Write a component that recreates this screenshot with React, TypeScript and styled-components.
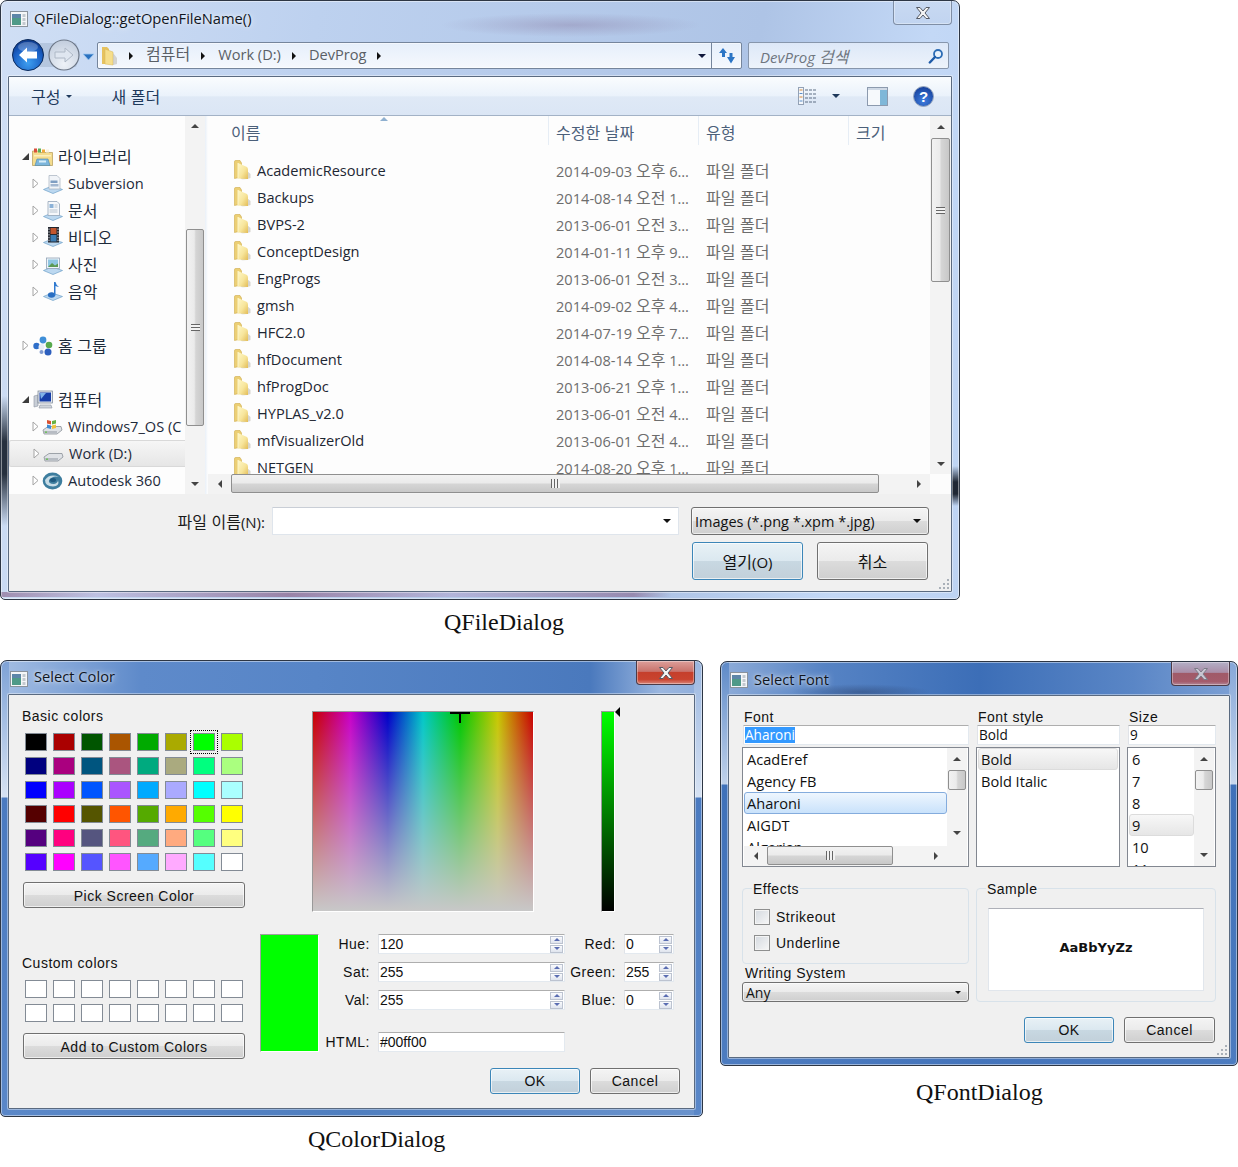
import React from "react";
import styled, { createGlobalStyle } from "styled-components";

const GlobalStyle = createGlobalStyle`
  html, body { margin: 0; padding: 0; background: #fff; }
  * { box-sizing: border-box; }
`;

const uiFont = `"Open Sans", "Noto Sans CJK KR", sans-serif`;
const qtFont = `"Liberation Sans", "Noto Sans CJK KR", sans-serif`;

const fileGlass = `
  linear-gradient(90deg, rgba(130,90,130,.6), rgba(170,130,180,.25) 10%, rgba(130,80,120,.6) 30%, rgba(170,130,180,.3) 47%, rgba(130,90,130,.55) 66%, transparent 70%) 0 calc(100% - 2px) / 100% 5px no-repeat,
  linear-gradient(180deg, transparent, #26303e 35%, #26303e 60%, transparent) 0 395px / 7px 130px no-repeat,
  linear-gradient(180deg, transparent, #1f2734 40%, #1f2734 70%, transparent) 100% 465px / 7px 40px no-repeat,
  radial-gradient(ellipse 130px 12px at 570px 24px, rgba(130,110,150,.35), transparent),
  linear-gradient(100deg, #d0dff5 0, #bdd1ef 30%, #aec4e6 72%, #c3d8f6 88%, #bdd3f3 100%)`;

const colorGlass = `
  linear-gradient(180deg, #7ea2d6 0, #d6e2f3 136px, #4a7ac0 137px, #5a87c8 100%) 0 0 / 8px 100% no-repeat,
  linear-gradient(180deg, #9ab6df 0, #d6e2f3 136px, #4a7ac0 137px, #5a87c8 100%) 100% 0 / 8px 100% no-repeat,
  linear-gradient(90deg, #a4bee3 0, #5e8aca 20%, #5785c7 45%, #4a79bd 84%, #9ab6df 94%, #90aedb 100%) 0 0 / 100% 34px no-repeat,
  linear-gradient(90deg, #5b88c8, #4f7ebf 50%, #6a93cd)`;

const fontGlass = `
  linear-gradient(180deg, #5e8ac8 0, #bfd1ea 122px, #3f71b9 123px, #4d7cc0 100%) 0 0 / 8px 100% no-repeat,
  linear-gradient(180deg, #86a7d8 0, #c8d8ee 122px, #3f71b9 123px, #4d7cc0 100%) 100% 0 / 8px 100% no-repeat,
  radial-gradient(ellipse 70px 8px at 140px 30px, rgba(40,60,100,.45), transparent),
  linear-gradient(90deg, #8fadd9 0, #5683c4 20%, #3c6eb7 50%, #5a86c6 80%, #7ea1d5 100%) 0 0 / 100% 34px no-repeat,
  linear-gradient(90deg, #4d7cc0, #4474bb 50%, #4d7cc0)`;

const Desktop = styled.main`
  position: relative;
  width: 1238px;
  height: 1167px;
  overflow: hidden;
  background: #fff;
  font-family: ${uiFont};
`;

const Window = styled.section<{ $x: number; $y: number; $w: number; $h: number; $glass: string }>`
  position: absolute;
  left: ${(p) => p.$x}px;
  top: ${(p) => p.$y}px;
  width: ${(p) => p.$w}px;
  height: ${(p) => p.$h}px;
  display: flex;
  flex-direction: column;
  padding: 0 7px 7px;
  border: 1px solid #2d3644;
  border-radius: 7px 7px 5px 5px;
  background: ${(p) => p.$glass};
  box-shadow: inset 0 0 0 1px rgba(255, 255, 255, 0.45);
  overflow: hidden;
`;

const Caption = styled.div<{ $x: number; $y: number }>`
  position: absolute;
  left: ${(p) => p.$x}px;
  top: ${(p) => p.$y}px;
  font: 24px/28px "Liberation Serif", serif;
  color: #111;
  white-space: nowrap;
`;

const TitleBar = styled.header<{ $h: number }>`
  flex: none;
  height: ${(p) => p.$h}px;
  display: flex;
  align-items: flex-start;
  padding-left: 2px;
`;

const TitleIconSlot = styled.span`
  flex: none;
  margin-top: 9px;
  width: 18px;
  height: 16px;
`;

const TitleText = styled.h1<{ $top: number }>`
  margin: ${(p) => p.$top}px 0 0 6px;
  font: 400 14.7px/20px ${uiFont};
  color: #10161f;
  text-shadow: 0 0 7px rgba(255, 255, 255, 0.85), 0 0 3px rgba(255, 255, 255, 0.6);
  white-space: nowrap;
`;

const CloseButton = styled.button<{ $kind: "idle" | "active" | "dim" }>`
  flex: none;
  margin-left: auto;
  width: 59px;
  height: 24px;
  padding: 0;
  display: flex;
  align-items: center;
  justify-content: center;
  border: 1px solid ${(p) => (p.$kind === "idle" ? "#7f8ea5" : "#4c3b47")};
  border-top: none;
  border-radius: 0 0 4px 4px;
  background: ${(p) =>
    p.$kind === "active"
      ? "linear-gradient(180deg,#dc9f9a 0,#c9736c 45%,#c53f2c 50%,#c9432f 80%,#d8867a 100%)"
      : p.$kind === "dim"
      ? "linear-gradient(180deg,#b3afc6 0,#aa8ea8 45%,#a05a68 50%,#a45c6c 85%,#b08798 100%)"
      : "linear-gradient(180deg,#c8d9f2,#c1d4f0)"};
  box-shadow: inset 0 0 0 1px rgba(255, 255, 255, 0.35);
`;

const AddressRow = styled.div`
  flex: none;
  height: 27px;
  margin-bottom: 7px;
  display: flex;
  align-items: stretch;
`;

const NavCluster = styled.div`
  flex: none;
  width: 85px;
  height: 34px;
  margin: -4px 0 -3px 4px;
`;

const PathBox = styled.div`
  flex: none;
  width: 645px;
  display: flex;
  align-items: center;
  border: 1px solid #75859c;
  border-radius: 2px;
  background: linear-gradient(180deg, #e6effb, #f5f8fd);
  box-shadow: inset 0 0 0 1px rgba(255, 255, 255, 0.5);
  font-size: 14.6px;
  color: #5a5f66;
`;

const PathIconSlot = styled.span`
  margin: 0 10px 0 3px;
  width: 18px;
  height: 20px;
`;

const Crumb = styled.span`
  margin-right: 11px;
  line-height: 22px;
  white-space: nowrap;
  padding-bottom: 4px;
`;

const CrumbArrow = styled.span`
  margin-right: 13px;
`;

const PathDrop = styled.span`
  margin-left: auto;
  margin-right: 5px;
`;

const RefreshCell = styled.span`
  flex: none;
  align-self: stretch;
  width: 30px;
  border-left: 1px solid #75859c;
  display: flex;
  align-items: center;
  justify-content: center;
`;

const SearchBox = styled.div`
  flex: none;
  margin-left: 6px;
  width: 201px;
  display: flex;
  align-items: center;
  padding: 0 4px 0 11px;
  border: 1px solid #8796ac;
  border-radius: 2px;
  background: linear-gradient(180deg, #dde8f8, #edf3fb);
  font-size: 15px;
  font-style: italic;
  color: #6f7680;
  justify-content: space-between;
`;

const Client = styled.div`
  flex: 1;
  min-height: 0;
  position: relative;
  display: flex;
  flex-direction: column;
  border: 1px solid #5a6a80;
  border-radius: 1px;
  background: #f0f0f0;
  box-shadow: 0 0 0 1px rgba(255, 255, 255, 0.4);
  overflow: hidden;
`;

const Toolbar = styled.div`
  flex: none;
  height: 39px;
  display: flex;
  align-items: center;
  border-bottom: 1px solid #a3b2c6;
  background: linear-gradient(180deg, #fafcfe 0, #eaf2fb 50%, #dfe9f6 52%, #dbe6f5 100%);
  color: #1e395b;
  font-size: 15px;
`;

const ToolLabel = styled.span`
  display: flex;
  align-items: center;
  gap: 6px;
  line-height: 20px;
`;

const ToolIcon = styled.span`
  display: flex;
  align-items: center;
`;

const Panes = styled.div`
  flex: none;
  height: 378px;
  display: flex;
  background: #fdfdfd;
`;

const NavTree = styled.nav`
  flex: none;
  width: 176px;
  padding-top: 27px;
  overflow: hidden;
  color: #1d2a3a;
  font-size: 14.6px;
`;

const NavRow = styled.div<{ $depth: number; $current?: boolean; $gap?: boolean }>`
  height: 27px;
  margin-bottom: ${(p) => (p.$gap ? "27px" : "0")};
  display: flex;
  align-items: center;
  padding-left: ${(p) => (p.$depth ? 20 : 10)}px;
  white-space: nowrap;
  border: ${(p) => (p.$current ? "1px solid #d9d9d9" : "none")};
  border-right: none;
  border-radius: 2px 0 0 2px;
  background: ${(p) => (p.$current ? "linear-gradient(180deg,#f6f6f6,#e6e6e6)" : "transparent")};
`;

const NavLabel = styled.span`
  padding-bottom: 2px;
`;

const IconSlot = styled.span<{ $w: number; $mr?: number }>`
  flex: none;
  width: ${(p) => p.$w}px;
  margin-right: ${(p) => p.$mr ?? 0}px;
  display: flex;
  align-items: center;
  justify-content: center;
`;

const Ko = styled.span`
  font-family: "Noto Sans CJK KR", sans-serif;
  font-size: 16px;
  word-spacing: 1px;
`;

const Mixed = ({ text }: { text: string }) => (
  <>
    {text.split(/([\uAC00-\uD7A3]+(?: [\uAC00-\uD7A3]+)*)/).map((part, i) =>
      i % 2 ? <Ko key={i}>{part}</Ko> : <React.Fragment key={i}>{part}</React.Fragment>
    )}
  </>
);

const Tri = styled.i<{ $d: "up" | "down" | "left" | "right"; $s?: number; $c?: string }>`
  display: block;
  flex: none;
  width: 0;
  height: 0;
  border-style: solid;
  ${({ $d, $s = 4, $c = "#444" }) => {
    const t = "transparent";
    if ($d === "up") return `border-width:0 ${$s}px ${$s}px;border-color:${t} ${t} ${$c};`;
    if ($d === "down") return `border-width:${$s}px ${$s}px 0;border-color:${$c} ${t} ${t};`;
    if ($d === "left") return `border-width:${$s}px ${$s}px ${$s}px 0;border-color:${t} ${$c} ${t} ${t};`;
    return `border-width:${$s}px 0 ${$s}px ${$s}px;border-color:${t} ${t} ${t} ${$c};`;
  }}
`;

const VBar = styled.div<{ $w?: number }>`
  flex: none;
  width: ${(p) => p.$w ?? 20}px;
  display: flex;
  flex-direction: column;
  background: #f3f3f3;
`;

const ScrollBtn = styled.div<{ $len?: number }>`
  flex: none;
  height: ${(p) => p.$len ?? 20}px;
  display: flex;
  align-items: center;
  justify-content: center;
`;

const VThumb = styled.div<{ $top: number; $h: number }>`
  flex: none;
  margin: ${(p) => p.$top}px 1px 0;
  height: ${(p) => p.$h}px;
  display: flex;
  align-items: center;
  justify-content: center;
  border: 1px solid #8f8f8f;
  border-radius: 2px;
  background: linear-gradient(90deg, #f2f2f2 0, #ebebeb 45%, #d5d5d5 55%, #c8c8c8 100%);
`;

const DownBtn = styled(ScrollBtn)`
  margin-top: auto;
`;

const GripV = styled.i`
  display: block;
  width: 9px;
  height: 7px;
  background: repeating-linear-gradient(180deg, #666 0 1px, #f2f2f2 1px 3px);
`;

const HBar = styled.div<{ $h?: number }>`
  flex: none;
  height: ${(p) => p.$h ?? 20}px;
  display: flex;
  align-items: stretch;
  background: #f3f3f3;
`;

const HBtn = styled.div`
  flex: none;
  width: 23px;
  display: flex;
  align-items: center;
  justify-content: center;
`;

const HThumb = styled.div<{ $w: number }>`
  flex: none;
  width: ${(p) => p.$w}px;
  margin: 0 0 1px;
  display: flex;
  align-items: center;
  justify-content: center;
  border: 1px solid #8f8f8f;
  border-radius: 2px;
  background: linear-gradient(180deg, #f2f2f2 0, #ebebeb 45%, #d5d5d5 55%, #c8c8c8 100%);
`;

const HEnd = styled(HBtn)`
  margin-left: auto;
`;

const GripH = styled.i`
  display: block;
  width: 9px;
  height: 9px;
  background: repeating-linear-gradient(90deg, #666 0 1px, #f2f2f2 1px 3px);
`;

const Splitter = styled.div`
  flex: none;
  width: 3px;
  background: linear-gradient(90deg, #e9f0f8, #fdfdfd);
`;

const ListSide = styled.div`
  flex: 1;
  min-width: 0;
  display: flex;
  flex-direction: column;
`;

const ListMain = styled.div`
  flex: 1;
  min-height: 0;
  display: flex;
`;

const FileArea = styled.div`
  flex: 1;
  min-width: 0;
  position: relative;
  overflow: hidden;
`;

const SortCaret = styled.span`
  position: absolute;
  left: 172px;
  top: 1px;
`;

const Columns = "340px 150px 150px 1fr";

const HeaderRow = styled.div`
  height: 40px;
  display: grid;
  grid-template-columns: ${Columns};
  padding-bottom: 11px;
  color: #4c607a;
  font-size: 15px;
`;

const HeaderCell = styled.div<{ $pad: number; $sep?: boolean }>`
  display: flex;
  align-items: center;
  padding: 3px 0 0 ${(p) => p.$pad}px;
  border-left: ${(p) => (p.$sep ? "1px solid #e6edf5" : "none")};
`;

const FileRow = styled.div`
  height: 27px;
  display: grid;
  grid-template-columns: ${Columns};
  align-items: center;
  white-space: nowrap;
  font-size: 14.6px;
`;

const NameCell = styled.div`
  display: flex;
  align-items: center;
  gap: 5px;
  padding-left: 26px;
  color: #1d2733;
`;

const MetaCell = styled.div`
  padding-left: 8px;
  color: #6d6d6d;
`;

const HCorner = styled.div`
  flex: none;
  width: 21px;
  background: #fcfcfc;
`;

const FilePanel = styled.div`
  flex: 1;
  display: flex;
  flex-direction: column;
  padding: 13px 22px 0 0;
`;

const FileFormRow = styled.div`
  display: flex;
  align-items: center;
  justify-content: flex-end;
  height: 28px;
`;

const FormLabel = styled.label`
  margin-right: 7px;
  font-size: 15px;
  color: #1b1b1b;
  white-space: nowrap;
`;

const FileNameInput = styled.div`
  width: 407px;
  height: 28px;
  margin-right: 12px;
  padding-right: 7px;
  display: flex;
  align-items: center;
  justify-content: flex-end;
  background: #fff;
  border: 1px solid #dfe5ec;
  border-top-color: #c9ced6;
  border-radius: 1px;
`;

const qtButtonFace = "linear-gradient(180deg,#f4f4f4 0,#ebebeb 49%,#dcdcdc 50%,#cfcfcf 100%)";

const Combo = styled.div<{ $w?: number; $h: number; $size?: number; $font?: string }>`
  width: ${(p) => (p.$w ? `${p.$w}px` : "100%")};
  height: ${(p) => p.$h}px;
  display: flex;
  align-items: center;
  justify-content: space-between;
  padding: 0 7px 0 3px;
  border: 1px solid #707070;
  border-radius: 3px;
  background: ${qtButtonFace};
  box-shadow: inset 0 0 0 1px rgba(255, 255, 255, 0.6);
  font-size: ${(p) => p.$size ?? 14.5}px;
  color: #111;
`;

const ButtonRow = styled.div<{ $gap: number; $top: number; $right?: number }>`
  display: flex;
  justify-content: flex-end;
  gap: ${(p) => p.$gap}px;
  margin-top: ${(p) => p.$top}px;
  padding-right: ${(p) => p.$right ?? 0}px;
`;

const QtButton = styled.button<{ $w?: number; $h: number; $default?: boolean; $ui?: boolean; $low?: boolean }>`
  flex: none;
  display: block;
  width: ${(p) => (p.$w ? `${p.$w}px` : "100%")};
  height: ${(p) => p.$h}px;
  padding: ${(p) => (p.$low ? "2px 0 0" : "0")};
  border: 1px solid ${(p) => (p.$default ? "#3c86b8" : "#707070")};
  border-radius: 3px;
  background: ${(p) =>
    p.$default
      ? "linear-gradient(180deg,#e8f1f6 0,#dbe8f0 49%,#c8d8e2 50%,#c2d0da 100%)"
      : qtButtonFace};
  box-shadow: inset 0 0 0 1px rgba(255, 255, 255, 0.65);
  font: ${(p) => (p.$ui ? `15px/20px ${uiFont}` : `14px/20px ${qtFont}`)};
  letter-spacing: ${(p) => (p.$ui ? 0 : 0.5)}px;
  color: #111;
`;

const ResizeGrip = styled.span`
  position: absolute;
  right: 1px;
  bottom: 1px;
  line-height: 0;
`;

/* ---- Color dialog ---- */

const QtText = styled.span`
  font: 14px/16px ${qtFont};
  letter-spacing: 0.5px;
  color: #111;
  white-space: nowrap;
`;

const ColorLayout = styled.div`
  flex: 1;
  display: grid;
  grid-template-columns: 222px 1fr;
  padding-left: 14px;
`;

const ColorLeft = styled.div`
  display: flex;
  flex-direction: column;
  padding-top: 13px;
`;

const GroupLabel = styled(QtText)<{ $top?: number }>`
  display: block;
  margin-top: ${(p) => p.$top ?? 0}px;
  margin-left: -1px;
`;

const SwatchGrid = styled.div<{ $top: number }>`
  display: grid;
  grid-template-columns: repeat(8, 22px);
  grid-auto-rows: 18px;
  gap: 6px;
  margin: ${(p) => p.$top}px 0 0 2px;
`;

const Swatch = styled.div<{ $c: string; $focus?: boolean }>`
  position: relative;
  border: 1px solid #838b95;
  background: ${(p) => p.$c};
  ${(p) =>
    p.$focus &&
    `&::after { content:""; position:absolute; inset:-4px; border:1px dotted #000; }`}
`;

const ColorRight = styled.div`
  display: flex;
  flex-direction: column;
  padding: 16px 14px 0 15px;
`;

const PickerRow = styled.div`
  flex: none;
  height: 201px;
  display: flex;
  padding-left: 52px;
`;

const Picker = styled.div`
  position: relative;
  width: 222px;
  height: 201px;
  border: 1px solid;
  border-color: #999 #fff #fff #999;
  background: linear-gradient(180deg, rgba(200, 200, 200, 0), #c8c8c8),
    linear-gradient(90deg, #c80000, #c800c8 17%, #0000c8 34%, #00c8c8 50%, #00c800 67%, #c8c800 84%, #c80000);
`;

const Crosshair = styled.span`
  position: absolute;
  left: 137px;
  top: 0;
  width: 20px;
  height: 11px;
  background: linear-gradient(#000, #000) 0 0 / 20px 2px no-repeat,
    linear-gradient(#000, #000) 9px 0 / 2px 11px no-repeat;
`;

const ValueBar = styled.div`
  position: relative;
  margin-left: 67px;
  width: 14px;
  height: 201px;
  border: 1px solid;
  border-color: #999 #fff #fff #999;
  background: linear-gradient(180deg, #00ff00, #000);
`;

const ValueMark = styled.span`
  position: absolute;
  left: 13px;
  top: -5px;
`;

const ColorBottom = styled.div`
  flex: none;
  margin-top: 22px;
  display: flex;
`;

const Preview = styled.div`
  flex: none;
  width: 59px;
  height: 118px;
  border: 1px solid;
  border-color: #a0a0a0 #fff #fff #a0a0a0;
  background: #00ff00;
`;

const FieldGrid = styled.div`
  display: grid;
  grid-template-columns: 51px 187px 43px 50px;
  grid-auto-rows: 20px;
  column-gap: 8px;
  row-gap: 8px;
`;

const FieldLabel = styled(QtText)`
  align-self: center;
  text-align: right;
  direction: ltr;
  justify-self: end;
`;

const Edit = styled.div`
  display: flex;
  align-items: center;
  height: 20px;
  padding-left: 1px;
  background: #fff;
  border: 1px solid #e3e9ef;
  border-top-color: #aeaeae;
  border-left-color: #e0e3e8;
  border-radius: 1px;
  font: 14px/16px ${qtFont};
  color: #111;
  white-space: nowrap;
  overflow: hidden;
`;

const HtmlLabel = styled(FieldLabel)`
  grid-column: 1;
  grid-row: 4;
  align-self: start;
  margin-top: 16px;
`;

const HtmlEdit = styled(Edit)`
  grid-column: 2;
  grid-row: 4;
  margin-top: 14px;
`;

const SpinStack = styled.span`
  margin-left: auto;
  margin-right: 1px;
  display: flex;
  flex-direction: column;
  gap: 1px;
`;

const SpinBtn = styled.span`
  width: 13px;
  height: 8px;
  display: flex;
  align-items: center;
  justify-content: center;
  border: 1px solid #bcc3d0;
  background: linear-gradient(180deg, #fafbfd, #dfe4ee);
`;

const Spin = ({ value }: { value: string }) => (
  <Edit>
    {value}
    <SpinStack>
      <SpinBtn>
        <Tri $d="up" $s={3} $c="#5a6db2" />
      </SpinBtn>
      <SpinBtn>
        <Tri $d="down" $s={3} $c="#5a6db2" />
      </SpinBtn>
    </SpinStack>
  </Edit>
);

/* ---- Font dialog ---- */

const FontLayout = styled.div`
  flex: 1;
  display: flex;
  flex-direction: column;
  padding: 13px 13px 0 13px;
`;

const FontTop = styled.div`
  display: grid;
  grid-template-columns: 227px 144px 89px;
  column-gap: 7px;
`;

const FontCol = styled.div`
  display: flex;
  flex-direction: column;
`;

const FontLabel = styled(QtText)`
  display: block;
  height: 16px;
  padding-left: 2px;
`;

const FontEdit = styled(Edit)`
  margin-left: 1px;
  font: 13.6px/16px ${uiFont};
`;

const Selected = styled.span`
  background: #3399ff;
  color: #fff;
`;

const ListFrame = styled.div<{ $cols: string; $rows?: string; $pad: string }>`
  margin-top: 2px;
  height: 120px;
  display: grid;
  grid-template-columns: ${(p) => p.$cols};
  grid-template-rows: ${(p) => p.$rows ?? "118px"};
  padding: ${(p) => p.$pad};
  border: 1px solid #828790;
  background: #fff;
  overflow: hidden;
`;

const Items = styled.div`
  overflow: hidden;
  min-width: 0;
`;

const Item = styled.div<{ $sel?: "blue" | "gray" }>`
  height: 22px;
  padding-left: ${(p) => (p.$sel ? 2 : 3)}px;
  display: flex;
  align-items: center;
  font-size: 14.6px;
  color: #111;
  white-space: nowrap;
  border: ${(p) =>
    p.$sel === "blue" ? "1px solid #84acdd" : p.$sel === "gray" ? "1px solid #dcdcdc" : "none"};
  border-radius: 3px;
  background: ${(p) =>
    p.$sel === "blue"
      ? "linear-gradient(180deg,#eef6fe,#c9e2fb)"
      : p.$sel === "gray"
      ? "linear-gradient(180deg,#f7f7f7,#e6e6e6)"
      : "transparent"};
`;

const FontBottom = styled.div`
  margin-top: 21px;
  display: grid;
  grid-template-columns: 227px 240px;
  column-gap: 7px;
`;

const GroupBox = styled.div<{ $h: number }>`
  position: relative;
  height: ${(p) => p.$h}px;
  border: 1px solid #d8e2ea;
  border-radius: 4px;
`;

const Legend = styled(QtText)`
  position: absolute;
  left: 9px;
  top: -8px;
  padding: 0 1px;
  background: #f0f0f0;
`;

const Checks = styled.div`
  display: flex;
  flex-direction: column;
  gap: 10px;
  padding: 20px 0 0 11px;
`;

const CheckRow = styled.div`
  display: flex;
  align-items: center;
  gap: 6px;
  height: 16px;
`;

const CheckBox = styled.span`
  flex: none;
  width: 16px;
  height: 16px;
  border: 1px solid #8e8f8f;
  background: linear-gradient(135deg, #d4d9df, #f7f7f7);
  box-shadow: inset 0 0 0 1px #f4f4f4;
`;

const WritingLabel = styled(QtText)`
  display: block;
  margin: 1px 0 1px 3px;
`;

const SampleBox = styled.div`
  position: absolute;
  left: 11px;
  top: 19px;
  width: 216px;
  height: 83px;
  display: flex;
  align-items: center;
  justify-content: center;
  padding-bottom: 4px;
  background: #fff;
  border: 1px solid #e1e6ec;
  border-top-color: #aeb0b8;
  font: 700 13px/16px "DejaVu Sans", sans-serif;
  color: #111;
`;

/* ---- Icons ---- */

const WindowIcon = () => (
  <svg width="18" height="16" viewBox="0 0 18 16">
    <rect x=".5" y=".5" width="17" height="15" fill="#f4f6f8" stroke="#8a929c" />
    <rect x="2" y="3" width="9" height="11" fill="#4f9a88" />
    <rect x="2" y="3" width="9" height="4" fill="#5d86a8" />
    <rect x="12.5" y="3" width="3" height="3" fill="#c3c9cf" />
    <rect x="12.5" y="7" width="3" height="3" fill="#c3c9cf" />
    <rect x="12.5" y="11" width="3" height="3" fill="#c3c9cf" />
  </svg>
);

const FolderIcon = () => (
  <svg width="18" height="20" viewBox="0 0 18 20">
    <defs>
      <linearGradient id="fg" x1="0" x2="1" y1="0" y2="1">
        <stop offset="0" stopColor="#fff8c8" />
        <stop offset=".55" stopColor="#f7e59b" />
        <stop offset="1" stopColor="#e3bc55" />
      </linearGradient>
    </defs>
    <path d="M6 5 L16.500 14 V18 Q11 20 7 19 Z" fill="#a9a698" opacity=".45" />
    <path d="M.5 1.5 Q.5 .5 2 .5 H6 L7.5 3 V17 L.5 18.5 Z" fill="#eccf74" stroke="#cfab4a" strokeWidth=".6" />
    <path d="M4 3 L13 7 Q14 8 14 10 V19 L4 18.5 Z" fill="url(#fg)" />
    <path d="M4 3 V18.5" stroke="#fbf3c6" strokeWidth="1" />
  </svg>
);

const Base = () => (
  <path d="M.5 15.5 L9 12 L19.5 15.5 L10 19.5 Z" fill="#bcd8f0" stroke="#6fa0c8" strokeWidth=".7" />
);

const LibraryIcon = () => (
  <svg width="21" height="20" viewBox="0 0 21 20">
    <path d="M.5 4 H7 L8.5 5.5 H20.5 V18.5 H.5 Z" fill="#f4dc8d" stroke="#b59a55" strokeWidth=".7" />
    <rect x="2" y="1.5" width="3" height="4" fill="#d94f3a" />
    <rect x="6" y="1.5" width="3" height="4" fill="#5cb05a" />
    <rect x="10" y="2.5" width="3" height="3" fill="#f2a93b" />
    <rect x="14" y="2.5" width="3" height="3" fill="#f9f3dd" />
    <path d="M2 8 H19 V9.5 H2 Z" fill="#fbf0bf" />
    <path d="M5 12 H16 L18 18.5 H3 Z" fill="#7db6dc" stroke="#4d86ad" strokeWidth=".6" />
    <rect x="7" y="13.5" width="7" height="2" fill="#d8edf8" />
  </svg>
);

const SvnIcon = () => (
  <svg width="20" height="20" viewBox="0 0 20 20">
    <Base />
    <path d="M6 1.5 H14 L17 4.5 V15 H6 Z" fill="#f1f4f8" stroke="#a5b0bd" strokeWidth=".7" />
    <rect x="7.5" y="6.5" width="7" height="2.5" fill="#7f9ec2" />
    <rect x="7.5" y="10" width="8" height="2.5" fill="#a3b7d0" />
  </svg>
);

const DocIcon = () => (
  <svg width="20" height="20" viewBox="0 0 20 20">
    <Base />
    <path d="M5 .5 H14 L16.5 3 V14.5 H5 Z" fill="#f6f8fb" stroke="#94a5b8" strokeWidth=".8" />
    <rect x="6.5" y="3" width="4" height="4" fill="#8cb2d8" />
    <path d="M6.5 9 H14.5 M6.5 11 H14.5 M11.5 4 H14.5 M11.5 6 H14.5" stroke="#a8b6c6" strokeWidth=".8" />
  </svg>
);

const VideoIcon = () => (
  <svg width="20" height="21" viewBox="0 0 20 21">
    <Base />
    <rect x="5" y="0" width="11" height="15.5" fill="#23262e" />
    <rect x="7.5" y="1" width="6" height="6" fill="#c2562f" />
    <rect x="7.5" y="8" width="6" height="6.5" fill="#3b7db5" />
    <path d="M6 1.5 V15 M15 1.5 V15" stroke="#cfd3da" strokeWidth="1" strokeDasharray="1.4 1.4" />
  </svg>
);

const PicIcon = () => (
  <svg width="20" height="20" viewBox="0 0 20 20">
    <Base />
    <rect x="3.5" y="3" width="13" height="10.5" fill="#eff4f9" stroke="#8fa2b6" strokeWidth=".8" />
    <rect x="5" y="4.5" width="10" height="7.5" fill="#8fc6e2" />
    <path d="M5 12 L9 8 L12 10.5 L15 8.5 V12 Z" fill="#5c9a54" />
  </svg>
);

const MusicIcon = () => (
  <svg width="20" height="21" viewBox="0 0 20 21">
    <Base />
    <ellipse cx="8.5" cy="14" rx="3.6" ry="2.8" fill="#2a6fc2" />
    <path d="M11 14 V1 H12.5 Q13 4 16 6 Q13.5 5.5 12.5 5 V14.5 Z" fill="#2f79cf" />
  </svg>
);

const HomeIcon = () => (
  <svg width="20" height="20" viewBox="0 0 20 20">
    <circle cx="3.5" cy="10" r="3.2" fill="#2f6fc9" />
    <circle cx="10" cy="4" r="3.4" fill="#3f8fd8" />
    <circle cx="16" cy="9" r="3.3" fill="#58a94c" />
    <circle cx="15" cy="16" r="3.5" fill="#2d5fbe" />
    <circle cx="8.5" cy="11" r="3" fill="#e8edf5" />
    <circle cx="8.5" cy="16" r="2" fill="#7f9ad0" />
  </svg>
);

const ComputerIcon = () => (
  <svg width="20" height="20" viewBox="0 0 20 20">
    <path d="M1 6 L5 5 V16 L1 17 Z" fill="#c8ced6" stroke="#8d96a2" strokeWidth=".6" />
    <rect x="5" y="1" width="14.5" height="12" fill="#e6ebf1" stroke="#747f8d" strokeWidth=".7" />
    <rect x="6.5" y="2.5" width="11.5" height="9" fill="#173fa8" />
    <path d="M7 3 L13 3 L8 9 Z" fill="#7fb2e8" />
    <path d="M7 15 H18 L19 18 H6 Z" fill="#cfd4db" stroke="#8d96a2" strokeWidth=".6" />
  </svg>
);

const DriveSvg = () => (
  <>
    <path d="M1 13 L6 9.5 H19 L20 13 L15 17 H2 Z" fill="#dfe2e6" stroke="#8a9098" strokeWidth=".8" />
    <path d="M2 14 H15 V16.5 H2 Z" fill="#b7bcc3" />
    <circle cx="4" cy="15.2" r=".9" fill="#63c04a" />
  </>
);

const WinDriveIcon = () => (
  <svg width="21" height="20" viewBox="0 0 21 20">
    <DriveSvg />
    <path d="M5 3 L9 4 V7.5 L5 6.5 Z" fill="#d9512f" />
    <path d="M10 4 L14 3 V6.5 L10 7.5 Z" fill="#67b144" />
    <path d="M5 7.5 L9 8.5 V12 L5 11 Z" fill="#3f8ad0" />
    <path d="M10 8.5 L14 7.5 V11 L10 12 Z" fill="#f0c23c" />
  </svg>
);

const DriveIcon = () => (
  <svg width="21" height="20" viewBox="0 0 21 20">
    <DriveSvg />
  </svg>
);

const AutodeskIcon = () => (
  <svg width="21" height="20" viewBox="0 0 21 20">
    <ellipse cx="10.5" cy="10" rx="9.8" ry="8.5" fill="#3d7d9e" />
    <path d="M3 9 Q8 2 17 6 Q11 4 7 9 Q6 13 12 13 Q16 12 16 9 Q18 15 11 15.5 Q3 15 3 9 Z" fill="#c7dce6" />
    <ellipse cx="11" cy="9" rx="3" ry="2" fill="#1f5a80" />
  </svg>
);

const NavButtons = () => (
  <svg width="85" height="34" viewBox="0 0 85 34">
    <defs>
      <radialGradient id="bk" cx=".5" cy=".75" r=".8">
        <stop offset="0" stopColor="#3e9ff0" />
        <stop offset=".6" stopColor="#1a5fc4" />
        <stop offset="1" stopColor="#0b2f7a" />
      </radialGradient>
      <radialGradient id="fw" cx=".5" cy=".8" r=".8">
        <stop offset="0" stopColor="#eef2f8" />
        <stop offset="1" stopColor="#c2cddd" />
      </radialGradient>
    </defs>
    <path d="M16 5 H64 Q70 17 64 29 H16 Z" fill="#a3b5ce" opacity=".55" />
    <circle cx="16" cy="17" r="15.5" fill="url(#bk)" stroke="#0d2a5a" />
    <path d="M7 17 L15 9.5 V13.5 H25 V20.5 H15 V24.5 Z" fill="#fff" />
    <ellipse cx="16" cy="9" rx="10" ry="5" fill="#fff" opacity=".25" />
    <circle cx="52" cy="17" r="15" fill="url(#fw)" stroke="#6c7686" strokeWidth="1.2" />
    <path d="M61 17 L53 10 V14 H43 V20 H53 V24 Z" fill="#dfe6f0" stroke="#aeb8c6" />
    <path d="M71 16 H82 L76.500 22 Z" fill="#2a72c0" stroke="#9fc7ef" strokeWidth=".8" />
  </svg>
);

const PathFolder = () => (
  <svg width="18" height="20" viewBox="0 0 18 20">
    <path d="M1 1 H6 L8 3 V18 H1 Z" fill="#e6c260" />
    <path d="M4 3 L12 6 V19 L4 18 Z" fill="#f6de8c" stroke="#d7b455" strokeWidth=".5" />
    <path d="M12 7 L16 12 V18 L12 19 Z" fill="#b5b2a5" opacity=".5" />
  </svg>
);

const RefreshIcon = () => (
  <svg width="18" height="16" viewBox="0 0 18 16">
    <path d="M5 0 L1 5 H4 V9 H7 V5 H9 Z" fill="#2c75c5" />
    <path d="M13 15.500 L17 9 H14.500 V5 H11.500 V9 H9 Z" fill="#2c75c5" />
  </svg>
);

const SearchIcon = () => (
  <svg width="16" height="16" viewBox="0 0 16 16">
    <circle cx="10" cy="6" r="4" fill="#e8f1fb" stroke="#2d6db5" strokeWidth="1.8" />
    <path d="M7 9 L1.800 14.500" stroke="#1e5ba8" strokeWidth="2.4" strokeLinecap="round" />
  </svg>
);

const ViewIcon = () => (
  <svg width="20" height="18" viewBox="0 0 20 18">
    <rect x=".5" y=".5" width="5" height="17" fill="#f4f7fb" stroke="#93a1b5" />
    <path d="M1.5 3 H4.500" stroke="#d58a3a" />
    <path d="M1.5 6.500 H4.500" stroke="#5a8ec9" />
    <path d="M1.5 10 H4.500" stroke="#d58a3a" />
    <path d="M1.5 14 H4.500" stroke="#5a8ec9" />
    <path d="M7 3 H19 M7 7 H19 M7 11 H19 M7 15 H19" stroke="#5f6f84" strokeDasharray="3 1" />
  </svg>
);

const PaneIcon = () => (
  <svg width="21" height="19" viewBox="0 0 21 19">
    <rect x=".5" y=".5" width="20" height="18" fill="#f6f9fc" stroke="#8c9aae" />
    <rect x="13" y="1" width="7" height="17" fill="#7fb7d8" />
    <rect x="1" y="1" width="19" height="2" fill="#cfd9e6" />
  </svg>
);

const HelpIcon = () => (
  <svg width="21" height="21" viewBox="0 0 21 21">
    <defs>
      <radialGradient id="hp" cx=".5" cy=".7" r=".75">
        <stop offset="0" stopColor="#3f7fe0" />
        <stop offset="1" stopColor="#123a95" />
      </radialGradient>
    </defs>
    <circle cx="10.500" cy="10.500" r="10" fill="url(#hp)" stroke="#9aa9bf" />
    <text x="10.500" y="16" textAnchor="middle" fontFamily="Liberation Sans" fontWeight="700" fontSize="15" fill="#fff">
      ?
    </text>
  </svg>
);

const CloseGlyph = ({ dim }: { dim?: boolean }) => (
  <svg width="16" height="14" viewBox="0 0 16 14">
    <path
      d="M1.500 1.500 H5 L8 5 L11 1.500 H14.500 L10 7 L14.500 12.500 H11 L8 9 L5 12.500 H1.500 L6 7 Z"
      fill={dim ? "#c9c6d2" : "#f4f4f4"}
      stroke={dim ? "#7c7c88" : "#555b66"}
      strokeWidth="1"
    />
  </svg>
);

const GripDots = () => (
  <svg width="12" height="12" viewBox="0 0 12 12" fill="#a9b0b8">
    <rect x="9" y="1" width="2" height="2" />
    <rect x="5" y="5" width="2" height="2" />
    <rect x="9" y="5" width="2" height="2" />
    <rect x="1" y="9" width="2" height="2" />
    <rect x="5" y="9" width="2" height="2" />
    <rect x="9" y="9" width="2" height="2" />
  </svg>
);

const Expander = ({ open }: { open?: boolean }) => (
  <svg width="9" height="11" viewBox="0 0 9 11">
    {open ? (
      <path d="M1 9 L8 9 L8 2 Z" fill="#3c3c3c" />
    ) : (
      <path d="M2 1 L7 5.500 L2 10 Z" fill="#fff" stroke="#a4a4a4" />
    )}
  </svg>
);

/* ---- Data ---- */

const navItems: { depth: number; open?: boolean; label: string; icon: React.ReactNode; current?: boolean; gap?: boolean }[] = [
  { depth: 0, open: true, label: "라이브러리", icon: <LibraryIcon /> },
  { depth: 1, label: "Subversion", icon: <SvnIcon /> },
  { depth: 1, label: "문서", icon: <DocIcon /> },
  { depth: 1, label: "비디오", icon: <VideoIcon /> },
  { depth: 1, label: "사진", icon: <PicIcon /> },
  { depth: 1, label: "음악", icon: <MusicIcon />, gap: true },
  { depth: 0, label: "홈 그룹", icon: <HomeIcon />, gap: true },
  { depth: 0, open: true, label: "컴퓨터", icon: <ComputerIcon /> },
  { depth: 1, label: "Windows7_OS (C", icon: <WinDriveIcon /> },
  { depth: 1, label: "Work (D:)", icon: <DriveIcon />, current: true },
  { depth: 1, label: "Autodesk 360", icon: <AutodeskIcon /> },
];

const files: [string, string][] = [
  ["AcademicResource", "2014-09-03 오후 6…"],
  ["Backups", "2014-08-14 오전 1…"],
  ["BVPS-2", "2013-06-01 오전 3…"],
  ["ConceptDesign", "2014-01-11 오후 9…"],
  ["EngProgs", "2013-06-01 오전 3…"],
  ["gmsh", "2014-09-02 오후 4…"],
  ["HFC2.0", "2014-07-19 오후 7…"],
  ["hfDocument", "2014-08-14 오후 1…"],
  ["hfProgDoc", "2013-06-21 오후 1…"],
  ["HYPLAS_v2.0", "2013-06-01 오전 4…"],
  ["mfVisualizerOld", "2013-06-01 오전 4…"],
  ["NETGEN", "2014-08-20 오후 1…"],
];

const basicColors = [
  "#000000", "#aa0000", "#005500", "#aa5500", "#00aa00", "#aaaa00", "#00ff00", "#aaff00",
  "#00007f", "#aa007f", "#00557f", "#aa557f", "#00aa7f", "#aaaa7f", "#00ff7f", "#aaff7f",
  "#0000ff", "#aa00ff", "#0055ff", "#aa55ff", "#00aaff", "#aaaaff", "#00ffff", "#aaffff",
  "#550000", "#ff0000", "#555500", "#ff5500", "#55aa00", "#ffaa00", "#55ff00", "#ffff00",
  "#55007f", "#ff007f", "#55557f", "#ff557f", "#55aa7f", "#ffaa7f", "#55ff7f", "#ffff7f",
  "#5500ff", "#ff00ff", "#5555ff", "#ff55ff", "#55aaff", "#ffaaff", "#55ffff", "#ffffff",
];

const FileDialog = () => (
  <Window $x={0} $y={0} $w={960} $h={600} $glass={fileGlass}>
    <TitleBar $h={41}>
      <TitleIconSlot>
        <WindowIcon />
      </TitleIconSlot>
      <TitleText $top={7}>QFileDialog::getOpenFileName()</TitleText>
      <CloseButton $kind="idle">
        <CloseGlyph />
      </CloseButton>
    </TitleBar>
    <AddressRow>
      <NavCluster>
        <NavButtons />
      </NavCluster>
      <PathBox>
        <PathIconSlot>
          <PathFolder />
        </PathIconSlot>
        <CrumbArrow>
          <Tri $d="right" $s={4} $c="#111" />
        </CrumbArrow>
        <Crumb>
          <Mixed text="컴퓨터" />
        </Crumb>
        <CrumbArrow>
          <Tri $d="right" $s={4} $c="#111" />
        </CrumbArrow>
        <Crumb>Work (D:)</Crumb>
        <CrumbArrow>
          <Tri $d="right" $s={4} $c="#111" />
        </CrumbArrow>
        <Crumb>DevProg</Crumb>
        <CrumbArrow>
          <Tri $d="right" $s={4} $c="#111" />
        </CrumbArrow>
        <PathDrop>
          <Tri $d="down" $s={4} $c="#10183c" />
        </PathDrop>
        <RefreshCell>
          <RefreshIcon />
        </RefreshCell>
      </PathBox>
      <SearchBox>
        <span>
          DevProg <Ko>검색</Ko>
        </span>
        <SearchIcon />
      </SearchBox>
    </AddressRow>
    <Client>
      <Toolbar>
        <IconSlot $w={22} />
        <ToolLabel>
          <Mixed text="구성" />
          <Tri $d="down" $s={3.5} $c="#1e395b" />
        </ToolLabel>
        <IconSlot $w={39} />
        <ToolLabel>
          <Mixed text="새 폴더" />
        </ToolLabel>
        <IconSlot $w={638} />
        <ToolIcon>
          <ViewIcon />
        </ToolIcon>
        <IconSlot $w={14} />
        <Tri $d="down" $s={4} $c="#1e395b" />
        <IconSlot $w={27} />
        <ToolIcon>
          <PaneIcon />
        </ToolIcon>
        <IconSlot $w={25} />
        <ToolIcon>
          <HelpIcon />
        </ToolIcon>
      </Toolbar>
      <Panes>
        <NavTree>
          {navItems.map((n) => (
            <NavRow key={n.label} $depth={n.depth} $current={n.current} $gap={n.gap}>
              <IconSlot $w={13}>
                <Expander open={n.open} />
              </IconSlot>
              <IconSlot $w={21} $mr={5}>
                {n.icon}
              </IconSlot>
              <NavLabel>
                <Mixed text={n.label} />
              </NavLabel>
            </NavRow>
          ))}
        </NavTree>
        <VBar>
          <ScrollBtn>
            <Tri $d="up" />
          </ScrollBtn>
          <VThumb $top={93} $h={197}>
            <GripV />
          </VThumb>
          <DownBtn>
            <Tri $d="down" />
          </DownBtn>
        </VBar>
        <Splitter />
        <ListSide>
          <ListMain>
            <FileArea>
              <SortCaret>
                <Tri $d="up" $s={4} $c="#8fb0d0" />
              </SortCaret>
              <HeaderRow>
                <HeaderCell $pad={23}>
                  <Mixed text="이름" />
                </HeaderCell>
                <HeaderCell $pad={7} $sep>
                  <Mixed text="수정한 날짜" />
                </HeaderCell>
                <HeaderCell $pad={7} $sep>
                  <Mixed text="유형" />
                </HeaderCell>
                <HeaderCell $pad={7} $sep>
                  <Mixed text="크기" />
                </HeaderCell>
              </HeaderRow>
              {files.map(([name, date]) => (
                <FileRow key={name}>
                  <NameCell>
                    <FolderIcon />
                    {name}
                  </NameCell>
                  <MetaCell>
                    <Mixed text={date} />
                  </MetaCell>
                  <MetaCell>
                    <Mixed text="파일 폴더" />
                  </MetaCell>
                </FileRow>
              ))}
            </FileArea>
            <VBar $w={21}>
              <ScrollBtn $len={21}>
                <Tri $d="up" />
              </ScrollBtn>
              <VThumb $top={1} $h={144}>
                <GripV />
              </VThumb>
              <DownBtn>
                <Tri $d="down" />
              </DownBtn>
            </VBar>
          </ListMain>
          <HBar>
            <HBtn>
              <Tri $d="left" />
            </HBtn>
            <HThumb $w={648}>
              <GripH />
            </HThumb>
            <HEnd>
              <Tri $d="right" />
            </HEnd>
            <HCorner />
          </HBar>
        </ListSide>
      </Panes>
      <FilePanel>
        <FileFormRow>
          <FormLabel>
            <Mixed text="파일 이름" />
            (N):
          </FormLabel>
          <FileNameInput>
            <Tri $d="down" $s={4.500} $c="#111" />
          </FileNameInput>
          <Combo $w={238} $h={28}>
            Images (*.png *.xpm *.jpg)
            <Tri $d="down" $s={4.500} $c="#111" />
          </Combo>
        </FileFormRow>
        <ButtonRow $gap={14} $top={7} $right={1}>
          <QtButton $w={111} $h={38} $default $ui>
            <Mixed text="열기" />
            (O)
          </QtButton>
          <QtButton $w={111} $h={38} $ui>
            <Mixed text="취소" />
          </QtButton>
        </ButtonRow>
      </FilePanel>
      <ResizeGrip>
        <GripDots />
      </ResizeGrip>
    </Client>
  </Window>
);

const ColorDialog = () => (
  <Window $x={0} $y={660} $w={703} $h={457} $glass={colorGlass}>
    <TitleBar $h={33}>
      <TitleIconSlot>
        <WindowIcon />
      </TitleIconSlot>
      <TitleText $top={5}>Select Color</TitleText>
      <CloseButton $kind="active">
        <CloseGlyph />
      </CloseButton>
    </TitleBar>
    <Client>
      <ColorLayout>
        <ColorLeft>
          <GroupLabel>Basic colors</GroupLabel>
          <SwatchGrid $top={9}>
            {basicColors.map((c, i) => (
              <Swatch key={c} $c={c} $focus={i === 6} />
            ))}
          </SwatchGrid>
          <ButtonRow $gap={0} $top={11}>
            <QtButton $h={26} $low>
              Pick Screen Color
            </QtButton>
          </ButtonRow>
          <GroupLabel $top={47}>Custom colors</GroupLabel>
          <SwatchGrid $top={9}>
            {Array.from({ length: 16 }, (_, i) => (
              <Swatch key={i} $c="#fff" />
            ))}
          </SwatchGrid>
          <ButtonRow $gap={0} $top={11}>
            <QtButton $h={26} $low>
              Add to Custom Colors
            </QtButton>
          </ButtonRow>
        </ColorLeft>
        <ColorRight>
          <PickerRow>
            <Picker>
              <Crosshair />
            </Picker>
            <ValueBar>
              <ValueMark>
                <Tri $d="left" $s={5} $c="#000" />
              </ValueMark>
            </ValueBar>
          </PickerRow>
          <ColorBottom>
            <Preview />
            <FieldGrid>
              <FieldLabel>Hue:</FieldLabel>
              <Spin value="120" />
              <FieldLabel>Red:</FieldLabel>
              <Spin value="0" />
              <FieldLabel>Sat:</FieldLabel>
              <Spin value="255" />
              <FieldLabel>Green:</FieldLabel>
              <Spin value="255" />
              <FieldLabel>Val:</FieldLabel>
              <Spin value="255" />
              <FieldLabel>Blue:</FieldLabel>
              <Spin value="0" />
              <HtmlLabel>HTML:</HtmlLabel>
              <HtmlEdit>#00ff00</HtmlEdit>
            </FieldGrid>
          </ColorBottom>
          <ButtonRow $gap={10} $top={16}>
            <QtButton $w={90} $h={26} $default>
              OK
            </QtButton>
            <QtButton $w={90} $h={26}>
              Cancel
            </QtButton>
          </ButtonRow>
        </ColorRight>
      </ColorLayout>
    </Client>
  </Window>
);

const FontDialog = () => (
  <Window $x={720} $y={661} $w={518} $h={405} $glass={fontGlass}>
    <TitleBar $h={33}>
      <TitleIconSlot>
        <WindowIcon />
      </TitleIconSlot>
      <TitleText $top={7}>Select Font</TitleText>
      <CloseButton $kind="dim">
        <CloseGlyph dim />
      </CloseButton>
    </TitleBar>
    <Client>
      <FontLayout>
        <FontTop>
          <FontCol>
            <FontLabel>Font</FontLabel>
            <FontEdit>
              <Selected>Aharoni</Selected>
            </FontEdit>
            <ListFrame $cols="203px 20px" $rows="98px 20px" $pad="0 1px">
              <Items>
                <Item>AcadEref</Item>
                <Item>Agency FB</Item>
                <Item $sel="blue">Aharoni</Item>
                <Item>AIGDT</Item>
                <Item>Algerian</Item>
              </Items>
              <VBar>
                <ScrollBtn $len={22}>
                  <Tri $d="up" />
                </ScrollBtn>
                <VThumb $top={0} $h={20} />
                <DownBtn $len={26}>
                  <Tri $d="down" />
                </DownBtn>
              </VBar>
              <HBar>
                <HBtn>
                  <Tri $d="left" />
                </HBtn>
                <HThumb $w={126}>
                  <GripH />
                </HThumb>
                <HEnd>
                  <Tri $d="right" />
                </HEnd>
              </HBar>
              <HBar />
            </ListFrame>
          </FontCol>
          <FontCol>
            <FontLabel>Font style</FontLabel>
            <FontEdit>Bold</FontEdit>
            <ListFrame $cols="1fr" $pad="0 1px">
              <Items>
                <Item $sel="gray">Bold</Item>
                <Item>Bold Italic</Item>
              </Items>
            </ListFrame>
          </FontCol>
          <FontCol>
            <FontLabel>Size</FontLabel>
            <FontEdit>9</FontEdit>
            <ListFrame $cols="65px 20px" $pad="0 1px">
              <Items>
                <Item>6</Item>
                <Item>7</Item>
                <Item>8</Item>
                <Item $sel="gray">9</Item>
                <Item>10</Item>
                <Item>11</Item>
              </Items>
              <VBar>
                <ScrollBtn $len={22}>
                  <Tri $d="up" />
                </ScrollBtn>
                <VThumb $top={0} $h={20} />
                <DownBtn $len={22}>
                  <Tri $d="down" />
                </DownBtn>
              </VBar>
            </ListFrame>
          </FontCol>
        </FontTop>
        <FontBottom>
          <FontCol>
            <GroupBox $h={76}>
              <Legend>Effects</Legend>
              <Checks>
                <CheckRow>
                  <CheckBox />
                  <QtText>Strikeout</QtText>
                </CheckRow>
                <CheckRow>
                  <CheckBox />
                  <QtText>Underline</QtText>
                </CheckRow>
              </Checks>
            </GroupBox>
            <WritingLabel>Writing System</WritingLabel>
            <Combo $h={20} $size={14}>
              Any
              <Tri $d="down" $s={3.500} $c="#111" />
            </Combo>
          </FontCol>
          <GroupBox $h={114}>
            <Legend>Sample</Legend>
            <SampleBox>AaBbYyZz</SampleBox>
          </GroupBox>
        </FontBottom>
        <ButtonRow $gap={10} $top={15} $right={1}>
          <QtButton $w={90} $h={26} $default>
            OK
          </QtButton>
          <QtButton $w={91} $h={26}>
            Cancel
          </QtButton>
        </ButtonRow>
      </FontLayout>
      <ResizeGrip>
        <GripDots />
      </ResizeGrip>
    </Client>
  </Window>
);

export default function App() {
  return (
    <Desktop>
      <GlobalStyle />
      <FileDialog />
      <Caption $x={444} $y={608}>QFileDialog</Caption>
      <ColorDialog />
      <Caption $x={308} $y={1125}>QColorDialog</Caption>
      <FontDialog />
      <Caption $x={916} $y={1078}>QFontDialog</Caption>
    </Desktop>
  );
}
